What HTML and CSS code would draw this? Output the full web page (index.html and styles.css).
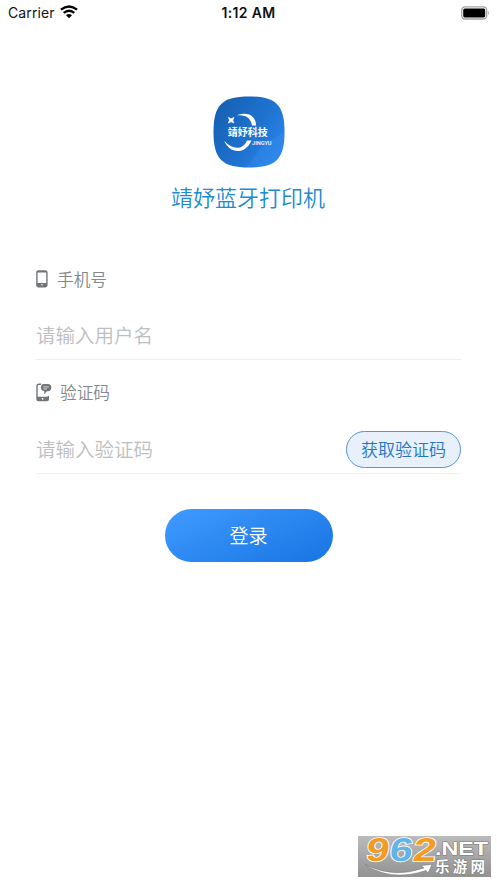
FILE: index.html
```html
<!DOCTYPE html>
<html lang="zh-CN">
<head>
<meta charset="utf-8">
<title>靖妤蓝牙打印机</title>
<link rel="stylesheet" href="styles.css">
</head>
<body>
<main class="screen">
  <header class="status">
    <div class="carrier"><span>Carrier</span>
      <svg width="18" height="14" viewBox="0 0 18 14" fill="none" stroke="#000" stroke-width="2.3"><path d="M.9 4.7Q9-1.8 17.1 4.7M3.7 7.9Q9 3.5 14.3 7.9"/><path d="M6 10.2Q9 7.8 12 10.2L9 13.2Z" fill="#000" stroke="none"/></svg>
    </div>
    <time>1:12 AM</time>
    <svg class="battery" width="30" height="14" viewBox="0 0 30 14"><rect x="1.7" y=".8" width="25" height="12.2" rx="3.4" fill="#fff" stroke="#a5a5a5" stroke-width="1.3"/><rect x="3.2" y="2.4" width="22" height="9" rx="1.6"/><path d="M28 4.7q1.7 2.2 0 4.4z" fill="#999"/></svg>
  </header>
  <section class="brand">
    <svg width="72" height="72" viewBox="0 0 72 72">
      <defs><linearGradient id="logo" x1="0" y1=".2" x2="1" y2=".8"><stop stop-color="#1660b2"/><stop offset=".55" stop-color="#1e72cf"/><stop offset="1" stop-color="#2c86ec"/></linearGradient></defs>
      <path d="M36 .5C63 .5 71.5 9 71.5 36S63 71.5 36 71.5.5 63 .5 36 9 .5 36 .5Z" fill="url(#logo)"/>
      <path d="M48 51L71 36Q71 60 60 67Q54 71 34 71Z" fill="#3790f0" opacity=".35"/>
      <path d="M24 19.3C35 15 43 20 43 29.6H39C38 22 33 18.4 24 19.3Z" fill="#fff"/>
      <path d="M11.2 44.8C19 54 30 54.5 34 44.5L38.5 44.5C32 59.5 16 57.5 11.2 44.8Z" fill="#fff"/>
      <path d="M15.3 21.3L18.2 22.7 21 21.4 19.8 24.2 21 27 18.1 25.8 15.3 27.1 16.5 24.2Z" fill="#fff" stroke="#fff" stroke-width=".6"/>
      <text class="logo-cn" x="14.8" y="39.7" textLength="40">靖妤科技</text>
      <text class="logo-en" x="39" y="49" textLength="19.5" lengthAdjust="spacingAndGlyphs">JINGYU</text>
    </svg>
    <h1>靖妤蓝牙打印机</h1>
  </section>
  <form class="login">
    <div class="label phone">
      <svg width="12" height="18" viewBox="0 0 12 18"><rect x=".9" y=".9" width="10" height="15.8" rx="1.6" fill="#fff" stroke="#727477" stroke-width="1.4"/><path d="M1 13h10v2.4q0 1.3-1.4 1.3H2.4Q1 16.7 1 15.4ZM1 1h10v1.6H1Z" fill="#727477"/><circle cx="6" cy="14.8" r=".8" fill="#fff"/></svg>
      <span>手机号</span>
    </div>
    <div class="field"><span class="hint">请输入用户名</span></div>
    <div class="label code">
      <svg width="16" height="19" viewBox="0 0 16 19"><path d="M5 1.3H2.7Q1 1.3 1 3V16q0 1.6 1.6 1.6h8.1q1.6 0 1.6-1.6v-3" fill="none" stroke="#727477" stroke-width="1.4"/><path d="M1 13.8h11.3v2.6q0 1.4-1.5 1.4H2.5Q1 17.8 1 16.4Z" fill="#727477"/><circle cx="6.7" cy="15.8" r=".9" fill="#fff"/><path d="M7.5 1H12q3.3 0 3.3 3.5T12 8.3H11L8.3 11.2V8.3Q5 8 5 4.6T7.5 1Z" fill="#727477"/><path d="M7.3 3.9h5.6M7.3 5.9H11" stroke="#fff" stroke-width=".7"/></svg>
      <span>验证码</span>
    </div>
    <div class="field with-button"><span class="hint">请输入验证码</span><button class="send" type="button">获取验证码</button></div>
    <button class="submit" type="button">登录</button>
  </form>
  <aside class="mark">
    <svg width="133" height="41" viewBox="0 0 133 41">
      <defs><linearGradient id="silver" x2="0" y2="1"><stop stop-color="#bbb"/><stop offset="1" stop-color="#929292"/></linearGradient></defs>
      <path d="M0 0H133V41H0Z" fill="url(#silver)"/>
      <path d="M7 28.5Q35 43 66 32L63.5 29.5 74 28.5 70 37 68 34.5Q33 46 7 28.5Z" fill="#fff" stroke="#777" stroke-width=".5"/>
      <g class="digits" transform="translate(0 25) skewX(-8) scale(1 1.1)"><text x="7" y="0" textLength="23" lengthAdjust="spacingAndGlyphs" fill="#f59a23">9</text><text x="30.5" y="0" textLength="23" lengthAdjust="spacingAndGlyphs" fill="#62b4e5">6</text><text x="54" y="0" textLength="23" lengthAdjust="spacingAndGlyphs" fill="#f59a23">2</text></g>
      <text class="net" x="77" y="19" textLength="53" lengthAdjust="spacingAndGlyphs">.NET</text>
      <text class="site" x="77" y="36.4" textLength="50">乐游网</text>
    </svg>
  </aside>
</main>
</body>
</html>
```
FILE: styles.css
```css
* { box-sizing: border-box; }
body {
  margin: 0;
  background: #fff;
  font-family: "Noto Sans CJK SC", sans-serif;
}
svg, .label span, .hint { display: block; }
.screen {
  width: 497px;
  height: 883px;
  display: flex;
  flex-direction: column;
  overflow: hidden;
}
.status {
  height: 26px;
  padding: 0 7px 0 8px;
  display: grid;
  grid-template-columns: 1fr auto 1fr;
  align-items: center;
  font: 14px/26px Inter, sans-serif;
  color: #111;
}
.status time {
  font-size: 14px;
  font-weight: 600;
  letter-spacing: .35px;
  margin-right: 1px;
}
.carrier {
  display: flex;
  align-items: center;
  gap: 5px;
}
.carrier span { letter-spacing: .1px; }
.carrier svg { margin-top: -2px; }
.battery { justify-self: end; margin-top: -1px; }
.brand {
  height: 214px;
  padding: 70px 0 0;
  display: flex;
  flex-direction: column;
  align-items: center;
}
h1 {
  margin: 12px 1px 0 0;
  font-size: 22px;
  line-height: 32px;
  font-weight: 350;
  color: #218bd0;
}
.logo-cn { font: 700 10px "Noto Sans CJK SC", sans-serif; fill: #fff; }
.logo-en { font: 500 5.8px Roboto, sans-serif; fill: #fff; }
.login {
  padding: 26px 36px 0;
  display: flex;
  flex-direction: column;
}
.label {
  height: 26px;
  display: flex;
  align-items: center;
  font-size: 16.7px;
  line-height: 26px;
  color: #85878a;
  font-weight: 350;
}
.label span { margin-top: -1px; }
.phone { gap: 9px; }
.code { gap: 8px; margin-top: 19px; }
.field {
  height: 68px;
  padding-top: 19px;
  border-bottom: 1px solid #eee;
  display: flex;
  align-items: center;
}
.code + .field { border-color: #f3f3f3; }
.with-button {
  height: 69px;
  padding-top: 20px;
  justify-content: space-between;
}
.hint {
  color: #bdbec0;
  font-size: 19.5px;
  line-height: 30px;
  font-weight: 350;
  margin-top: -1px;
}
button {
  padding: 0 0 2px;
  font-family: inherit;
  font-weight: 350;
}
.send {
  width: 115px;
  height: 37px;
  border: 1px solid #5597cf;
  border-radius: 19px;
  background: #e7f0fb;
  color: #2475cc;
  font-size: 17px;
}
.submit {
  align-self: center;
  width: 168px;
  height: 53px;
  margin: 35px 0 0;
  border: 0;
  border-radius: 27px;
  background: linear-gradient(155deg, #409bff, #1774e3);
  color: #fff;
  font-size: 19px;
}
.mark {
  margin: auto 6px 6px auto;
}
.mark svg { overflow: visible; }
.digits { font: 700 30px "Liberation Sans", sans-serif; stroke: #fff; stroke-width: 1.5px; paint-order: stroke; }
.net { font: 700 17.5px "Liberation Sans", sans-serif; fill: #fff; stroke: #777; stroke-width: 1px; paint-order: stroke; }
.site { font: 700 14.5px "Noto Sans CJK SC", sans-serif; fill: #fff; stroke: #777; stroke-width: 1px; paint-order: stroke; }
```
